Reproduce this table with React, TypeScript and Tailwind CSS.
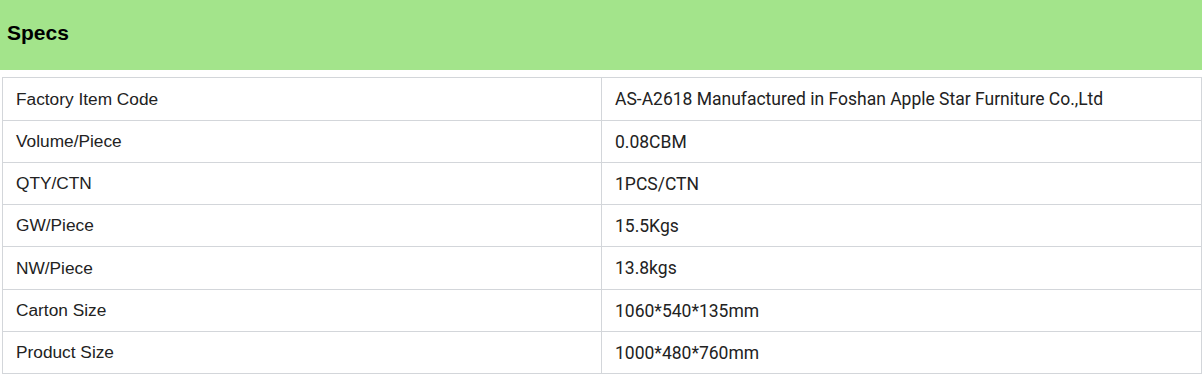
const specs: { label: string; value: string; h: string }[] = [
    { label: "Factory Item Code", value: "AS-A2618 Manufactured in Foshan Apple Star Furniture Co.,Ltd", h: "h-[43px]" },
    { label: "Volume/Piece", value: "0.08CBM", h: "h-[42px]" },
    { label: "QTY/CTN", value: "1PCS/CTN", h: "h-[42px]" },
    { label: "GW/Piece", value: "15.5Kgs", h: "h-[42px]" },
    { label: "NW/Piece", value: "13.8kgs", h: "h-[43px]" },
    { label: "Carton Size", value: "1060*540*135mm", h: "h-[42px]" },
    { label: "Product Size", value: "1000*480*760mm", h: "h-[41px]" },
];

export default function App() {
    return (
        <div className="w-[1204px] h-[377px] bg-white">
            {/* Header */}
            <div className="h-[70px] mr-[2px] bg-[#a3e48b] flex items-center px-[7px] pb-[4px]">
                <h2 className="text-[21px] font-bold text-black font-['Liberation_Sans',Arial,sans-serif]">
                    Specs
                </h2>
            </div>

            {/* Table */}
            <div className="mt-[7px] ml-[2px] w-[1200px] border border-[#d3d6da]">
                {specs.map((row, i) => (
                    <div
                        key={row.label}
                        className={`flex ${row.h} ${i < specs.length - 1 ? "border-b border-[#d3d6da]" : ""}`}
                    >
                        <div className="w-[599px] shrink-0 border-r border-[#d3d6da] flex items-center pl-[13px] pt-[1px] text-[17.3px] text-[#222] font-['Liberation_Sans',Arial,sans-serif]">
                            {row.label}
                        </div>
                        <div className="flex-1 flex items-center pl-[13px] pt-[1px] text-[17.5px] text-[#222] font-['Roboto',sans-serif]">
                            {row.value}
                        </div>
                    </div>
                ))}
            </div>
        </div>
    );
}
